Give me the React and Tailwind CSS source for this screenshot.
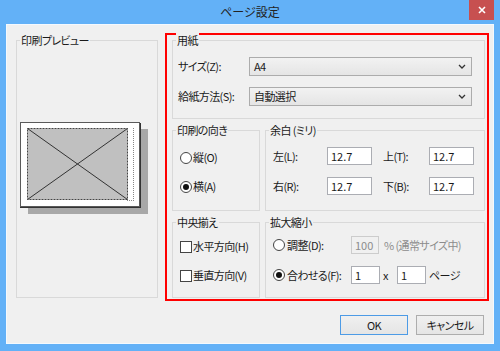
import React from "react";

function Group({ label, className, children }) {
  return (
    <div className={`relative border border-[#d9d9d9] ${className}`}>
      <span className="absolute -top-[8px] left-[3px] bg-[#f0f0f0] px-[1px] leading-[14px]">
        {label}
      </span>
      {children}
    </div>
  );
}

function Radio({ checked }) {
  return (
    <span className="w-[12px] h-[12px] rounded-full border border-[#444] bg-white flex items-center justify-center shrink-0">
      {checked && <span className="w-[6px] h-[6px] rounded-full bg-[#111]" />}
    </span>
  );
}

function Check() {
  return <span className="w-[12px] h-[12px] border border-[#444] bg-white shrink-0" />;
}

function Select({ value }) {
  return (
    <div className="w-[223px] h-[19px] border border-[#acacac] bg-gradient-to-b from-[#f2f2f2] to-[#e5e5e5] flex items-center justify-between pl-[4px] pr-[5px]">
      <span className="leading-none">{value}</span>
      <svg width="8" height="5" viewBox="0 0 8 5">
        <path d="M1 1 L4 4 L7 1" fill="none" stroke="#333" strokeWidth="1.3" />
      </svg>
    </div>
  );
}

function Field({ value, className = "w-[45px]", disabled }) {
  return (
    <div
      className={`h-[18px] border flex items-center pl-[3px] leading-none tracking-normal ${className} ${
        disabled ? "border-[#cccccc] bg-[#f0f0f0] text-[#8c8c8c]" : "border-[#abadb3] bg-white"
      }`}
    >
      {value}
    </div>
  );
}

function Preview() {
  return (
    <svg width="140" height="256" viewBox="0 0 140 256">
      <rect x="11" y="88" width="120" height="85" fill="#a8a8a8" />
      <rect x="3.5" y="81.5" width="119" height="84" fill="#ffffff" stroke="#5a5a5a" />
      <line x1="123.5" y1="82" x2="123.5" y2="166.5" stroke="#333" />
      <line x1="3" y1="166.5" x2="124" y2="166.5" stroke="#333" />
      <rect x="10.5" y="87.5" width="100" height="71" fill="#c0c0c0" stroke="#444" strokeDasharray="2 1" />
      <line x1="10.5" y1="87.5" x2="110.5" y2="158.5" stroke="#333" />
      <line x1="110.5" y1="87.5" x2="10.5" y2="158.5" stroke="#333" />
      <line x1="116.5" y1="87" x2="116.5" y2="160" stroke="#888" strokeDasharray="1 1" />
      <line x1="110" y1="159.5" x2="117" y2="159.5" stroke="#888" strokeDasharray="1 1" />
    </svg>
  );
}

export default function App() {
  return (
    <div className="w-[500px] h-[351px] bg-[#63b1f7] flex flex-col text-[11px] text-[#1a1a1a] tracking-[-0.6px] font-['Noto_Sans_CJK_JP','Noto_Sans',sans-serif] [font-feature-settings:'palt']">
      {/* タイトルバー */}
      <div className="relative h-[24px] flex items-center justify-center">
        <span className="text-[12px] text-[#222] leading-none tracking-normal">ページ設定</span>
        <div className="absolute right-[6px] top-0 w-[25px] h-[20px] bg-[#c75050] flex items-center justify-center">
          <svg width="8" height="8" viewBox="0 0 8 8">
            <path d="M1 1 L7 7 M7 1 L1 7" stroke="#fff" strokeWidth="1.6" />
          </svg>
        </div>
      </div>

      {/* 本体 */}
      <div className="ml-[6px] mr-[6px] h-[320px] border border-[#f4f9fe] bg-[#f0f0f0] flex flex-col">
        <div className="flex items-start pt-[8px] pl-[9px]">
          <Group label="印刷プレビュー" className="mt-[7px] w-[142px] h-[258px]">
            <Preview />
          </Group>

          <div className="ml-[7px] w-[324px] border-2 border-[#ff0000] pt-[5px] pl-[5px] pr-[2px] pb-[1px] flex flex-col gap-[11px]">
            <Group label="用紙" className="h-[79px] pt-[16px] pl-[5px] flex flex-col gap-[11px]">
              <div className="flex items-center">
                <span className="w-[71px]">サイズ(Z):</span>
                <Select value="A4" />
              </div>
              <div className="flex items-center">
                <span className="w-[71px]">給紙方法(S):</span>
                <Select value="自動選択" />
              </div>
            </Group>

            <div className="flex gap-[5px]">
              <Group label="印刷の向き" className="w-[88px] h-[81px] pt-[18px] pl-[7px] flex flex-col gap-[12px]">
                <div className="h-[17px] flex items-center gap-[1px]">
                  <Radio />
                  <span>縦(O)</span>
                </div>
                <div className="h-[17px] flex items-center gap-[1px]">
                  <Radio checked />
                  <span>横(A)</span>
                </div>
              </Group>
              <Group label="余白 (ミリ)" className="w-[220px] h-[81px] pt-[16px] pl-[7px] flex flex-col gap-[12px]">
                <div className="flex items-center">
                  <span className="w-[54px]">左(L):</span>
                  <Field value="12.7" />
                  <span className="ml-[11px] w-[46px]">上(T):</span>
                  <Field value="12.7" />
                </div>
                <div className="flex items-center">
                  <span className="w-[54px]">右(R):</span>
                  <Field value="12.7" />
                  <span className="ml-[11px] w-[46px]">下(B):</span>
                  <Field value="12.7" />
                </div>
              </Group>
            </div>

            <div className="flex gap-[5px]">
              <Group label="中央揃え" className="w-[88px] h-[76px] pt-[15px] pl-[7px] flex flex-col gap-[12px]">
                <div className="h-[17px] flex items-center gap-[1px]">
                  <Check />
                  <span>水平方向(H)</span>
                </div>
                <div className="h-[17px] flex items-center gap-[1px]">
                  <Check />
                  <span>垂直方向(V)</span>
                </div>
              </Group>
              <Group label="拡大縮小" className="w-[220px] h-[76px] pt-[13px] pl-[7px] flex flex-col gap-[12px]">
                <div className="flex items-center">
                  <div className="w-[78px] flex items-center gap-[2px]">
                    <Radio />
                    <span>調整(D):</span>
                  </div>
                  <Field value="100" className="w-[28px]" disabled />
                  <span className="ml-[5px] text-[#8c8c8c]">% (通常サイズ中)</span>
                </div>
                <div className="flex items-center">
                  <div className="w-[78px] flex items-center gap-[2px]">
                    <Radio checked />
                    <span>合わせる(F):</span>
                  </div>
                  <Field value="1" className="w-[29px]" />
                  <span className="w-[17px] pl-[3px]">x</span>
                  <Field value="1" className="w-[29px]" />
                  <span className="ml-[3px]">ページ</span>
                </div>
              </Group>
            </div>
          </div>
        </div>

        <div className="flex justify-end gap-[8px] pr-[9px] mt-[14px]">
          <button className="w-[68px] h-[20px] border border-[#4d9be6] bg-gradient-to-b from-[#f0f0f0] to-[#e5e5e5] leading-none">
            OK
          </button>
          <button className="w-[68px] h-[20px] border border-[#adadad] bg-gradient-to-b from-[#f0f0f0] to-[#e5e5e5] leading-none">
            キャンセル
          </button>
        </div>
      </div>
    </div>
  );
}
